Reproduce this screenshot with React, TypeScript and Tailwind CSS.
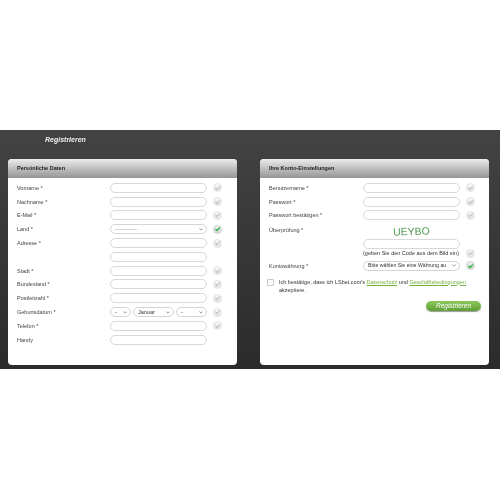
import React from "react";

const leftRows: { label: string; type?: "select" | "date"; check?: "gray" | "green" | "none" }[] = [
  { label: "Vorname *" },
  { label: "Nachname *" },
  { label: "E-Mail *" },
  { label: "Land *", type: "select", check: "green" },
  { label: "Adresse *" },
  { label: "", check: "none" },
  { label: "Stadt *" },
  { label: "Bundesland *" },
  { label: "Postleitzahl *" },
  { label: "Geburtsdatum *", type: "date" },
  { label: "Telefon *" },
  { label: "Handy", check: "none" },
];

function Check({ green = false }: { green?: boolean }) {
  return (
    <div className={`flex h-[9px] w-[9px] items-center justify-center rounded-full border bg-gradient-to-b ${green ? "border-[#cfcfcf] from-[#f4f4f4] to-[#d6d6d6]" : "border-[#e2e2e2] from-[#f8f8f8] to-[#e2e2e2]"}`}>
      <svg viewBox="0 0 10 10" className="h-[8px] w-[8px]">
        <path
          d="M2 5 L4.3 7.2 L8.4 2.8"
          fill="none"
          stroke={green ? "#2fb84a" : "#a6a6a6"}
          strokeWidth={green ? 2 : 1.4}
        />
      </svg>
    </div>
  );
}

function Chevron() {
  return (
    <svg viewBox="0 0 6 4" className="h-[3px] w-[4px] shrink-0">
      <path d="M0.5 0.5 L3 3 L5.5 0.5" fill="none" stroke="#666" strokeWidth="1" />
    </svg>
  );
}

function Input() {
  return <div className="h-[10px] w-[97px] rounded-full border border-[#d8d8d8] bg-white" />;
}

function Select({ text, className, muted = false }: { text: string; className: string; muted?: boolean }) {
  return (
    <div className={`flex h-[10px] items-center justify-between rounded-full border border-[#d4d4d4] bg-white pl-[4px] pr-[3px] ${muted ? "text-[#999]" : "text-[#333]"} ${className}`}>
      <span className="truncate">{text}</span>
      <Chevron />
    </div>
  );
}

function Row({ label, children, check, labelWidth = "w-[93px]", className = "h-[13.8px]" }: { label: string; children: React.ReactNode; check?: "gray" | "green" | "none"; labelWidth?: string; className?: string }) {
  return (
    <div className={`flex items-center ${className}`}>
      <div className={`${labelWidth} shrink-0 text-[5.5px] text-[#444]`}>{label}</div>
      <div className="w-[97px] shrink-0">{children}</div>
      <div className="ml-[6px]">
        {check !== "none" && <Check green={check === "green"} />}
      </div>
    </div>
  );
}

function Panel({ title, children }: { title: string; children: React.ReactNode }) {
  return (
    <div className="h-[206px] w-[229px] overflow-hidden rounded-[4px] bg-white">
      <div className="flex h-[19px] items-center bg-gradient-to-b from-[#ececec] to-[#959595] px-[9px] text-[5.5px] font-bold text-[#222]">
        {title}
      </div>
      {children}
    </div>
  );
}

export default function App() {
  const rightLabel = "w-[94px]";
  return (
    <div className="h-[500px] w-[500px] overflow-hidden bg-white pt-[130px] blur-[0.5px] [font-family:'Liberation_Sans',Arial,sans-serif]">
      <div className="h-[239px] bg-gradient-to-b from-[#434343] to-[#2b2b2b] px-[8px] pt-[5px]">
        <div className="ml-[37px] h-[24px] text-[7px] font-bold italic leading-[10px] text-[#eee]">Registrieren</div>
        <div className="flex gap-[23px]">
          <Panel title="Persönliche Daten">
            <div className="px-[9px] pt-[3px]">
              {leftRows.map((r, i) => (
                <Row key={i} label={r.label} check={r.check}>
                  {r.type === "select" ? (
                    <Select text="————" muted className="w-[97px] text-[5.5px]" />
                  ) : r.type === "date" ? (
                    <div className="flex gap-[2px]">
                      <Select text="-" className="w-[21px] text-[5.5px]" />
                      <Select text="Januar" className="w-[41px] text-[5.5px]" />
                      <Select text="-" className="w-[31px] text-[5.5px]" />
                    </div>
                  ) : (
                    <Input />
                  )}
                </Row>
              ))}
            </div>
          </Panel>
          <Panel title="Ihre Konto-Einstellungen">
            <div className="px-[9px] pt-[3px]">
              <Row label="Benutzername *" labelWidth={rightLabel}><Input /></Row>
              <Row label="Passwort *" labelWidth={rightLabel}><Input /></Row>
              <Row label="Passwort bestätigen *" labelWidth={rightLabel}><Input /></Row>
              <Row label="Überprüfung *" labelWidth={rightLabel} check="none" className="h-[14.6px]">
                <div className="pt-[3px] text-center text-[10.5px] leading-[11px] text-[#4f9a4f] [transform:rotate(-2deg)]">UEYBO</div>
              </Row>
              <Row label="" labelWidth={rightLabel} check="none"><Input /></Row>
              <Row label="" labelWidth={rightLabel} className="h-[5px]">
                <div className="whitespace-nowrap text-[5.5px] text-[#333]">(geben Sie den Code aus dem Bild ein)</div>
              </Row>
              <Row label="Kontowährung *" labelWidth={rightLabel} check="green" className="mt-[3px] h-[13.8px]">
                <Select text="Bitte wählen Sie eine Währung au" className="w-[97px] text-[5.2px]" />
              </Row>
              <div className="mt-[5px] flex">
                <div className="-ml-[2px] mr-[5px] mt-[1px] h-[7px] w-[7px] shrink-0 rounded-[1px] border border-[#c8c8c8] bg-white" />
                <p className="w-[195px] text-[5.5px] leading-[8px] text-[#333]">
                  Ich bestätige, dass ich LSbet.com's <span className="text-[#74b23f] underline">Datenschutz</span> und <span className="text-[#74b23f] underline">Geschäftsbedingungen</span> akzeptiere.
                </p>
              </div>
              <div className="mt-[7px] flex justify-end">
                <div className="mr-[-1px] flex h-[10px] w-[55px] items-center justify-center rounded-full bg-gradient-to-b from-[#8cc95c] to-[#5f9e35] text-[6.5px] italic text-white shadow-[0_1px_1px_rgba(0,0,0,0.4)]">
                  Registrieren
                </div>
              </div>
            </div>
          </Panel>
        </div>
      </div>
    </div>
  );
}
